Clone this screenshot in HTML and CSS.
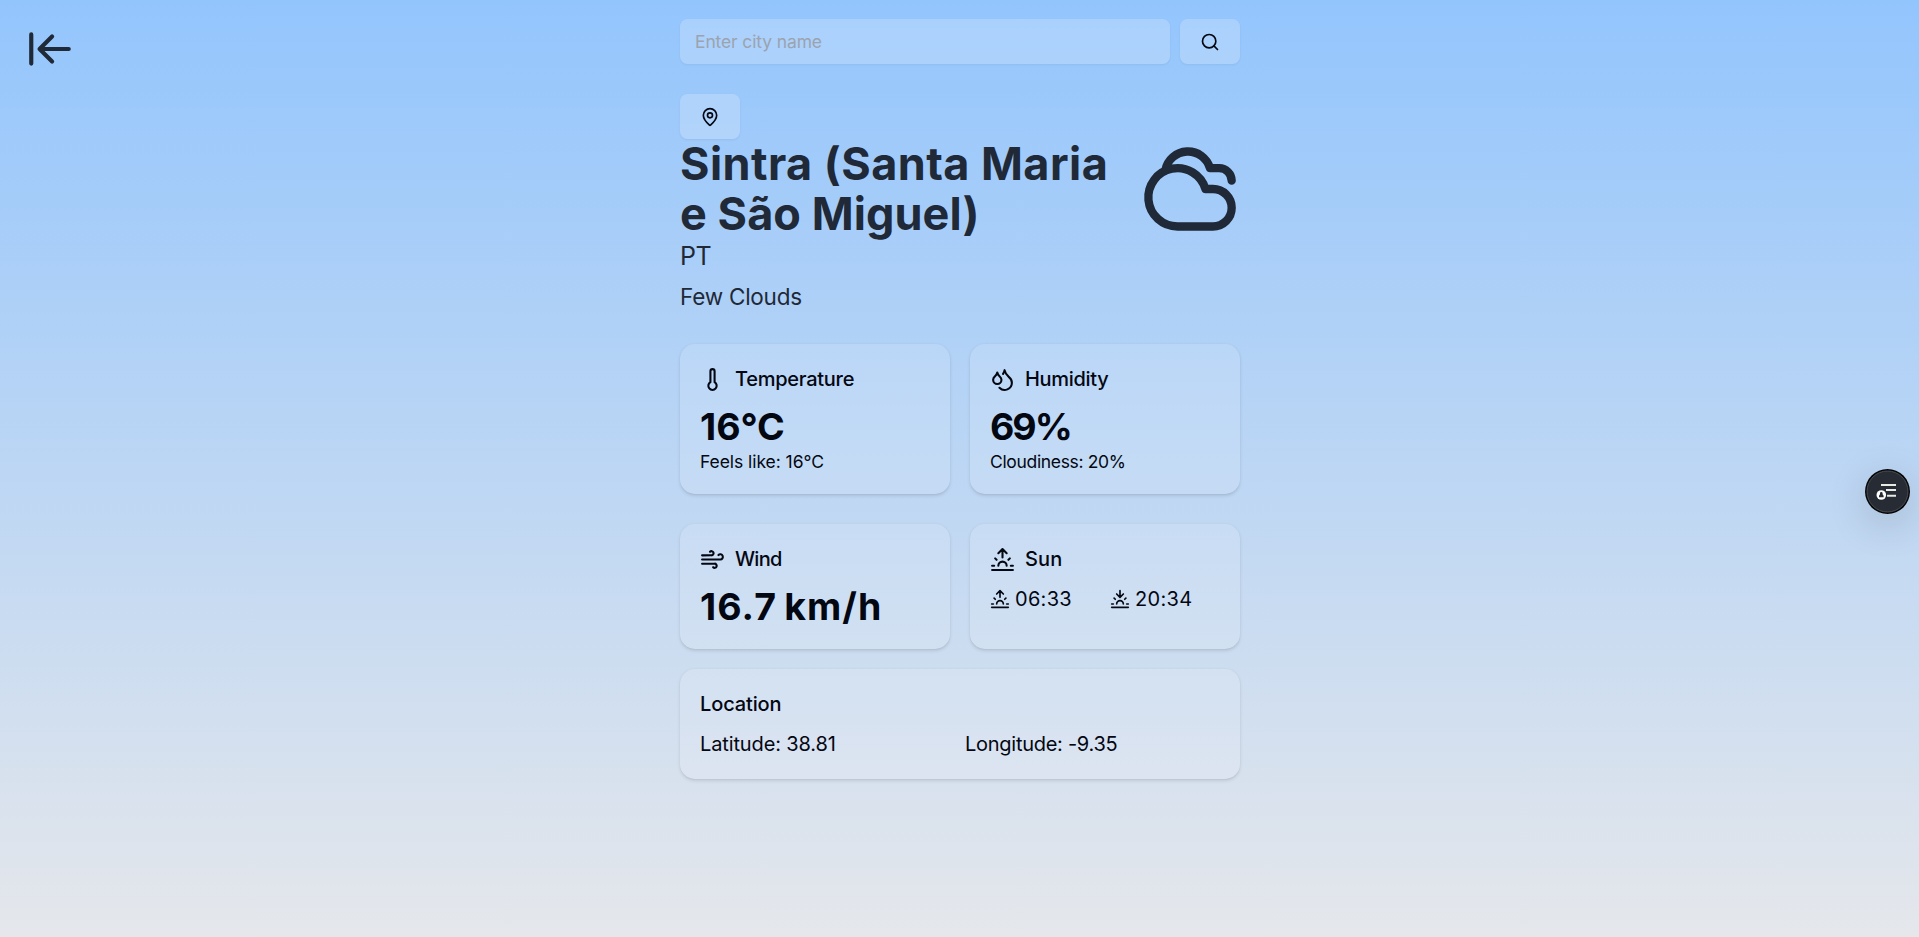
FILE: index.html
```html
<!DOCTYPE html>
<html lang="en">
<head>
<meta charset="utf-8">
<title>Weather</title>
<link rel="stylesheet" href="styles.css">
</head>
<body>
<svg width="0" height="0" class="defs">
  <symbol id="sunrise" viewBox="0 0 24 24"><path d="M12 2v8M4.93 10.93l1.41 1.41M2 18h2M20 18h2M19.07 10.93l-1.41 1.41M22 22H2M8 6l4-4 4 4M16 18a4 4 0 0 0-8 0"/></symbol>
  <symbol id="sunset" viewBox="0 0 24 24"><path d="M12 10V2M4.93 10.93l1.41 1.41M2 18h2M20 18h2M19.07 10.93l-1.41 1.41M22 22H2M16 6l-4 4-4-4M16 18a4 4 0 0 0-8 0"/></symbol>
</svg>
<div class="page">
  <a class="back" aria-label="Back"><svg class="icon" width="50" height="50" viewBox="0 0 24 24"><path d="M3 19V5M13 6l-6 6 6 6M7 12h14"/></svg></a>
  <main class="main">
    <form class="search">
      <input class="field" type="text" placeholder="Enter city name">
      <button class="btn" type="button" aria-label="Search"><svg class="icon" width="20" height="20" viewBox="0 0 24 24"><circle cx="11" cy="11" r="8"/><path d="m21 21-4.3-4.3"/></svg></button>
    </form>
    <button class="btn" type="button" aria-label="Use my location"><svg class="icon" width="20" height="20" viewBox="0 0 24 24"><path d="M20 10c0 4.993-5.539 10.193-7.399 11.799a1 1 0 0 1-1.202 0C9.539 20.193 4 14.993 4 10a8 8 0 0 1 16 0"/><circle cx="12" cy="10" r="3"/></svg></button>
    <header class="place">
      <div class="names">
        <h1 class="city"><span class="city-first">Sintra (Santa Maria</span><br>e São Miguel)</h1>
        <p class="country">PT</p>
        <p class="summary">Few Clouds</p>
      </div>
      <svg class="icon" width="100" height="100" viewBox="0 0 24 24"><path d="M17.5 21H9a7 7 0 1 1 6.71-9h1.79a4.5 4.5 0 1 1 0 9Z"/><path d="M22 10a3 3 0 0 0-3-3h-2.207a5.502 5.502 0 0 0-10.702.5"/></svg>
    </header>
    <div class="cards">
      <section class="card">
        <h2 class="title temp"><svg class="icon" width="25" height="25" viewBox="0 0 24 24"><path d="M14 4v10.54a4 4 0 1 1-4 0V4a2 2 0 0 1 4 0Z"/></svg>Temperature</h2>
        <p class="value">16°C</p>
        <p class="note feels">Feels like: 16°C</p>
      </section>
      <section class="card">
        <h2 class="title humid"><svg class="icon" width="25" height="25" viewBox="0 0 24 24"><path d="M7 16.3c2.2 0 4-1.83 4-4.05 0-1.16-.57-2.26-1.71-3.19S7.29 6.75 7 5.3c-.29 1.45-1.14 2.84-2.29 3.76S3 11.1 3 12.25c0 2.22 1.8 4.05 4 4.05z"/><path d="M12.56 6.6A10.97 10.97 0 0 0 14 3.02c.5 2.5 2 4.9 4 6.5s3 3.5 3 5.5a6.98 6.98 0 0 1-11.91 4.97"/></svg>Humidity</h2>
        <p class="value percent">69%</p>
        <p class="note cloudiness">Cloudiness: 20%</p>
      </section>
      <section class="card">
        <h2 class="title wind"><svg class="icon" width="25" height="25" viewBox="0 0 24 24"><path d="M17.7 7.7a2.5 2.5 0 1 1 1.8 4.3H2"/><path d="M9.6 4.6A2 2 0 1 1 11 8H2"/><path d="M12.6 19.4A2 2 0 1 0 14 16H2"/></svg>Wind</h2>
        <p class="value speed">16.7 km/h</p>
      </section>
      <section class="card">
        <h2 class="title sun"><svg class="icon" width="25" height="25"><use href="#sunrise"/></svg>Sun</h2>
        <div class="pair">
          <span class="time"><svg class="icon" width="20" height="20"><use href="#sunrise"/></svg>06:33</span>
          <span class="time"><svg class="icon" width="20" height="20"><use href="#sunset"/></svg>20:34</span>
        </div>
      </section>
    </div>
    <section class="card location">
      <h2 class="title">Location</h2>
      <div class="pair">
        <span class="lat">Latitude: 38.81</span>
        <span class="lon">Longitude: -9.35</span>
      </div>
    </section>
  </main>
  <div class="float">
    <svg width="45" height="45" viewBox="0 0 45 45">
      <circle cx="22.5" cy="22.5" r="22.5" fill="#050608"/>
      <circle cx="22.5" cy="22.5" r="20.5" fill="#272b33" stroke="#4b4e54"/>
      <path d="M16 16h15M21 21h10M22 26.7h9" fill="none" stroke="#e8e8e4" stroke-width="2"/>
      <circle cx="16.3" cy="26" r="5.8" fill="#272b33"/>
      <circle cx="16.3" cy="26" r="4.8" fill="#fff"/>
      <path d="M14 28.2v-1.6q1-.5 1-2.2a1.3 1.3 0 0 1 2.6 0q0 1.7 1 2.2v1.6z" fill="#272b33"/>
    </svg>
  </div>
</div>
</body>
</html>
```

FILE: styles.css
```css
* { box-sizing: border-box; margin: 0; padding: 0; }
html { font-size: 20px; }
body { font-family: Inter, "Liberation Sans", sans-serif; color: #030712; line-height: 1.5; }
.defs { position: absolute; }
.page { position: relative; height: 937px; padding-left: 1px; overflow: hidden; background: linear-gradient(to bottom, #93c5fd, #e5e7eb); }
.icon { flex: none; fill: none; stroke: currentColor; stroke-width: 2; stroke-linecap: round; stroke-linejoin: round; }
.back { position: absolute; left: 25px; top: 24px; height: 50px; color: #1f2937; }
.main { width: 560px; margin: 0 auto; padding-top: 19px; }
.search { display: flex; gap: 10px; margin-bottom: 30px; }
.field, .btn { height: 45px; border: 0; border-radius: 7.5px; background: rgba(255,255,255,.2); box-shadow: 0 1px 2.5px rgba(0,0,0,.06); font: 17.5px/25px Inter, sans-serif; color: inherit; }
.field { flex: 1; padding: 0 15px; letter-spacing: -.13px; }
.field::placeholder { color: #9ca3af; opacity: 1; }
.btn { display: flex; align-items: center; justify-content: center; width: 60px; }
.place { display: flex; justify-content: space-between; color: #1f2937; }
.city { font-size: 45px; line-height: 50px; font-weight: 700; letter-spacing: .07px; white-space: nowrap; }
.city-first { letter-spacing: .45px; }
.country { font-size: 25px; line-height: 35px; letter-spacing: -.4px; }
.summary { margin-top: 5px; font-size: 22.5px; line-height: 35px; letter-spacing: -.23px; }
.cards { display: grid; grid-template-columns: 1fr 1fr; column-gap: 20px; row-gap: 30px; margin-top: 30px; }
.card { padding: 20px; border-radius: 15px; background: rgba(255,255,255,.12); box-shadow: 0 1.25px 3.75px rgba(0,0,0,.1), 0 1.25px 2.5px -1.25px rgba(0,0,0,.1); }
.title { display: flex; align-items: center; gap: 10px; margin-bottom: 10px; font-size: 20px; line-height: 30px; font-weight: 500; letter-spacing: -.12px; }
.temp { letter-spacing: -.26px; }
.humid { letter-spacing: -.3px; }
.wind { letter-spacing: -.7px; }
.sun { letter-spacing: .17px; }
.value { font-size: 37.5px; line-height: 45px; font-weight: 700; }
.percent { letter-spacing: -2px; }
.speed { letter-spacing: 1.1px; word-spacing: -3px; }
.note { font-size: 17.5px; line-height: 25px; }
.feels { letter-spacing: -.06px; }
.cloudiness { letter-spacing: -.34px; }
.pair { display: grid; grid-template-columns: 1fr 1fr; gap: 10px; }
.time { display: flex; align-items: center; gap: 5px; letter-spacing: .3px; }
.location { margin-top: 20px; }
.lat { letter-spacing: -.13px; }
.lon { letter-spacing: -.27px; }
.float { position: absolute; left: 1865px; top: 469px; width: 45px; height: 45px; border-radius: 50%; box-shadow: 0 10px 40px rgba(0,0,0,.16); }
.float svg { display: block; }
```
